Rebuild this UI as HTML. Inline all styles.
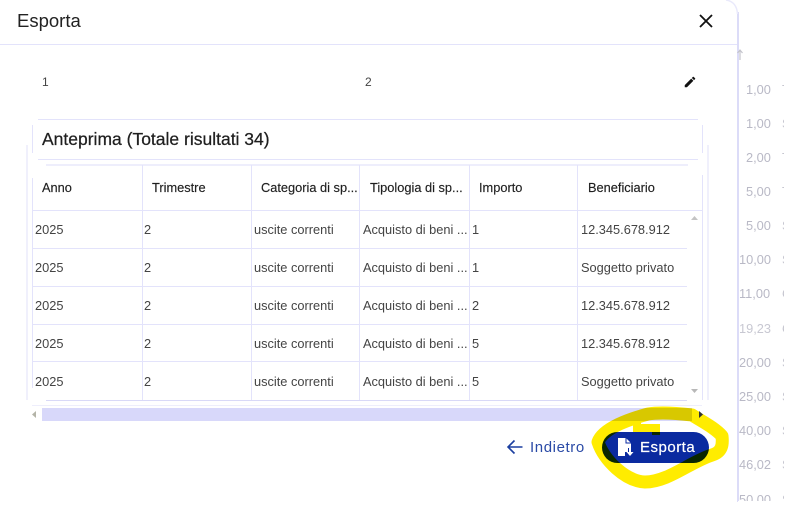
<!DOCTYPE html>
<html lang="it">
<head>
<meta charset="utf-8">
<title>Esporta</title>
<style>
html,body{margin:0;padding:0;background:#fff}
body{width:795px;height:508px;position:relative;overflow:hidden;font-family:"Liberation Sans",sans-serif;color:#1c1c1c}
.t{position:absolute;white-space:nowrap;line-height:16px}
.l{position:absolute;background:#e3e3fb}
.h{font-size:12.800px;color:#1f1f1f;-webkit-text-stroke:.15px #1f1f1f}
.c{font-size:12.800px;color:#444}
.n{font-size:12.800px;color:#b9b9c6;left:746px}
.m{font-size:12.800px;color:#c6c6d0;left:782px}
</style>
</head>
<body>
<!-- background column behind the dialog -->
<div class="l" style="left:737px;top:12px;width:2px;height:490px;background:#dcdcf8"></div>
<svg style="position:absolute;left:736px;top:48px" width="8" height="14" viewBox="0 0 8 14"><path d="M4 12V2M1.500 5 4 2l2.500 3" fill="none" stroke="#c4c4cc" stroke-width="1.200"/></svg>
<div class="t n" style="top:82px">1,00</div><div class="t m" style="top:82px">T</div>
<div class="t n" style="top:116px">1,00</div><div class="t m" style="top:116px">S</div>
<div class="t n" style="top:150px">2,00</div><div class="t m" style="top:150px">T</div>
<div class="t n" style="top:184px">5,00</div><div class="t m" style="top:184px">T</div>
<div class="t n" style="top:218px">5,00</div><div class="t m" style="top:218px">S</div>
<div class="t n" style="left:739px;top:252px">10,00</div><div class="t m" style="top:252px">S</div>
<div class="t n" style="left:739px;top:286px">11,00</div><div class="t m" style="top:286px">C</div>
<div class="t n" style="left:739px;top:321px;color:#c8c8d2">19,23</div><div class="t m" style="top:321px">C</div>
<div class="t n" style="left:739px;top:355px">20,00</div><div class="t m" style="top:355px">S</div>
<div class="t n" style="left:739px;top:389px">25,00</div><div class="t m" style="top:389px">S</div>
<div class="t n" style="left:739px;top:423px">40,00</div><div class="t m" style="top:423px">S</div>
<div class="t n" style="left:739px;top:457px">46,02</div><div class="t m" style="top:457px">S</div>
<div class="t n" style="left:739px;top:492px">50,00</div><div class="t m" style="top:492px">S</div>
<!-- screenshot crop edges -->
<div style="position:absolute;left:784px;top:0;width:11px;height:508px;background:#fff"></div>
<div style="position:absolute;left:738px;top:501px;width:57px;height:7px;background:#fff"></div>

<!-- dialog -->
<div style="position:absolute;left:-12px;top:-12px;width:748px;height:530px;background:#fff;border-radius:12px"></div>
<svg style="position:absolute;left:722px;top:0" width="18" height="16" viewBox="0 0 18 16"><path d="M4 0C11 1 15 6 15.500 14" fill="none" stroke="#e9e9fb" stroke-width="1.500"/></svg>
<div class="l" style="left:0;top:44px;width:737px;height:1px"></div>
<div class="t" style="left:17px;top:10px;font-size:18.500px;line-height:22px;color:#222">Esporta</div>
<svg style="position:absolute;left:698px;top:13px" width="16" height="16" viewBox="0 0 16 16"><path d="M2 2l12 12M14 2 2 14" stroke="#111" stroke-width="1.800" fill="none"/></svg>

<div class="t" style="left:42px;top:74px;font-size:12px;color:#444">1</div>
<div class="t" style="left:365px;top:74px;font-size:12px;color:#444">2</div>
<svg style="position:absolute;left:683px;top:75px" width="14" height="14" viewBox="0 0 24 24"><path d="M3 17.250V21h3.750L17.810 9.940l-3.750-3.750L3 17.250zM20.710 7.040a1 1 0 0 0 0-1.410l-2.340-2.340a1 1 0 0 0-1.410 0l-1.830 1.830 3.750 3.750 1.830-1.830z" fill="#111"/></svg>

<!-- preview title card -->
<div class="l" style="left:38px;top:119px;width:660px;height:1px"></div>
<div class="l" style="left:38px;top:159px;width:660px;height:1px"></div>
<div class="l" style="left:32px;top:125px;width:1px;height:28px"></div>
<div class="l" style="left:702px;top:125px;width:1px;height:28px"></div>
<div class="l" style="left:26px;top:145px;width:2px;height:255px;background:#f0f0fc"></div>
<div class="l" style="left:707px;top:145px;width:2px;height:255px;background:#f0f0fc"></div>
<div class="t" style="left:42px;top:128px;font-size:17.500px;line-height:22px;color:#1f1f1f;-webkit-text-stroke:.25px #1f1f1f">Anteprima (Totale risultati 34)</div>

<!-- table lines -->
<div class="l" style="left:46px;top:164px;width:642px;height:2px;background:#eeeefc"></div>
<div class="l" style="left:32px;top:210px;width:671px;height:1px"></div>
<div class="l" style="left:32px;top:248px;width:655px;height:1px"></div>
<div class="l" style="left:32px;top:286px;width:655px;height:1px"></div>
<div class="l" style="left:32px;top:324px;width:655px;height:1px"></div>
<div class="l" style="left:32px;top:361px;width:655px;height:1px"></div>
<div class="l" style="left:46px;top:400px;width:641px;height:1px;background:#d9d9f7"></div>
<div class="l" style="left:32px;top:178px;width:1px;height:210px"></div>
<div class="l" style="left:142px;top:165px;width:1px;height:235px"></div>
<div class="l" style="left:251px;top:165px;width:1px;height:235px"></div>
<div class="l" style="left:359px;top:165px;width:1px;height:235px"></div>
<div class="l" style="left:469px;top:165px;width:1px;height:235px"></div>
<div class="l" style="left:577px;top:165px;width:1px;height:235px"></div>
<div class="l" style="left:702px;top:175px;width:1px;height:225px"></div>

<!-- header -->
<div class="t h" style="left:42px;top:180px">Anno</div>
<div class="t h" style="left:152px;top:180px">Trimestre</div>
<div class="t h" style="left:261px;top:180px">Categoria di sp...</div>
<div class="t h" style="left:370px;top:180px">Tipologia di sp...</div>
<div class="t h" style="left:479px;top:180px">Importo</div>
<div class="t h" style="left:588px;top:180px">Beneficiario</div>

<!-- rows -->
<div class="t c" style="left:35px;top:222px">2025</div><div class="t c" style="left:144px;top:222px">2</div><div class="t c" style="left:254px;top:222px">uscite correnti</div><div class="t c" style="left:363px;top:222px">Acquisto di beni ...</div><div class="t c" style="left:472px;top:222px">1</div><div class="t c" style="left:581px;top:222px">12.345.678.912</div>
<div class="t c" style="left:35px;top:260px">2025</div><div class="t c" style="left:144px;top:260px">2</div><div class="t c" style="left:254px;top:260px">uscite correnti</div><div class="t c" style="left:363px;top:260px">Acquisto di beni ...</div><div class="t c" style="left:472px;top:260px">1</div><div class="t c" style="left:581px;top:260px">Soggetto privato</div>
<div class="t c" style="left:35px;top:298px">2025</div><div class="t c" style="left:144px;top:298px">2</div><div class="t c" style="left:254px;top:298px">uscite correnti</div><div class="t c" style="left:363px;top:298px">Acquisto di beni ...</div><div class="t c" style="left:472px;top:298px">2</div><div class="t c" style="left:581px;top:298px">12.345.678.912</div>
<div class="t c" style="left:35px;top:336px">2025</div><div class="t c" style="left:144px;top:336px">2</div><div class="t c" style="left:254px;top:336px">uscite correnti</div><div class="t c" style="left:363px;top:336px">Acquisto di beni ...</div><div class="t c" style="left:472px;top:336px">5</div><div class="t c" style="left:581px;top:336px">12.345.678.912</div>
<div class="t c" style="left:35px;top:374px">2025</div><div class="t c" style="left:144px;top:374px">2</div><div class="t c" style="left:254px;top:374px">uscite correnti</div><div class="t c" style="left:363px;top:374px">Acquisto di beni ...</div><div class="t c" style="left:472px;top:374px">5</div><div class="t c" style="left:581px;top:374px">Soggetto privato</div>

<!-- scroll arrows -->
<svg style="position:absolute;left:690px;top:215px" width="9" height="6"><path d="M1 5h7L4.500 1z" fill="#c4c4c4"/></svg>
<svg style="position:absolute;left:690px;top:388px" width="9" height="6"><path d="M1 1h7L4.500 5z" fill="#b8b8b8"/></svg>
<!-- horizontal scrollbar -->
<div class="l" style="left:32px;top:405px;width:670px;height:1px;background:#eeeefc"></div>
<div class="l" style="left:42px;top:408px;width:650px;height:13px;background:#d8d8fa"></div>
<svg style="position:absolute;left:31px;top:410px" width="6" height="9"><path d="M5 1v7L1 4.500z" fill="#b4b4a8"/></svg>

<!-- footer buttons -->
<svg style="position:absolute;left:506px;top:439px" width="18" height="16" viewBox="0 0 18 16"><path d="M16.500 8H2M8.500 1.500 2 8l6.500 6.500" fill="none" stroke="#1c3fa0" stroke-width="1.600"/></svg>
<div class="t" style="left:530px;top:440px;font-size:15px;letter-spacing:.6px;color:#2a4aa6">Indietro</div>

<div style="position:absolute;left:602px;top:432px;width:107px;height:31px;border-radius:16px;background:#0a2aa0"></div>
<svg style="position:absolute;left:616px;top:437px" width="20" height="21" viewBox="0 0 20 21"><path d="M2 1h8l5 5v5h-3v4H9v4H2z" fill="#fff"/><path d="M10 1v5h5" fill="none" stroke="#0a2aa0" stroke-width="1"/><path d="M13 11h2v4h2.500L14 19l-3.500-4H13z" fill="#fff"/></svg>
<div class="t" style="left:640px;top:440px;font-size:15px;letter-spacing:.5px;color:#fff;-webkit-text-stroke:.2px #fff">Esporta</div>

<!-- yellow highlighter -->
<svg style="position:absolute;left:0;top:0;mix-blend-mode:multiply" width="795" height="508" viewBox="0 0 795 508">
<path d="M692 415C675 413 660 412 648 414C630 419 603 428 598 442C604 460 625 481 645 482C668 482 690 462 712 455C722 452 723 445 722 436C715 428 703 422 692 415" fill="none" stroke="#ffec00" stroke-width="13" stroke-linejoin="round" stroke-linecap="round"/>
<path d="M637 420V428H656V435" fill="none" stroke="#ffec00" stroke-width="8"/>
</svg>
<svg style="position:absolute;left:698px;top:410px" width="6" height="9"><path d="M1 1v7l4-3.500z" fill="#333"/></svg>
</body>
</html>
